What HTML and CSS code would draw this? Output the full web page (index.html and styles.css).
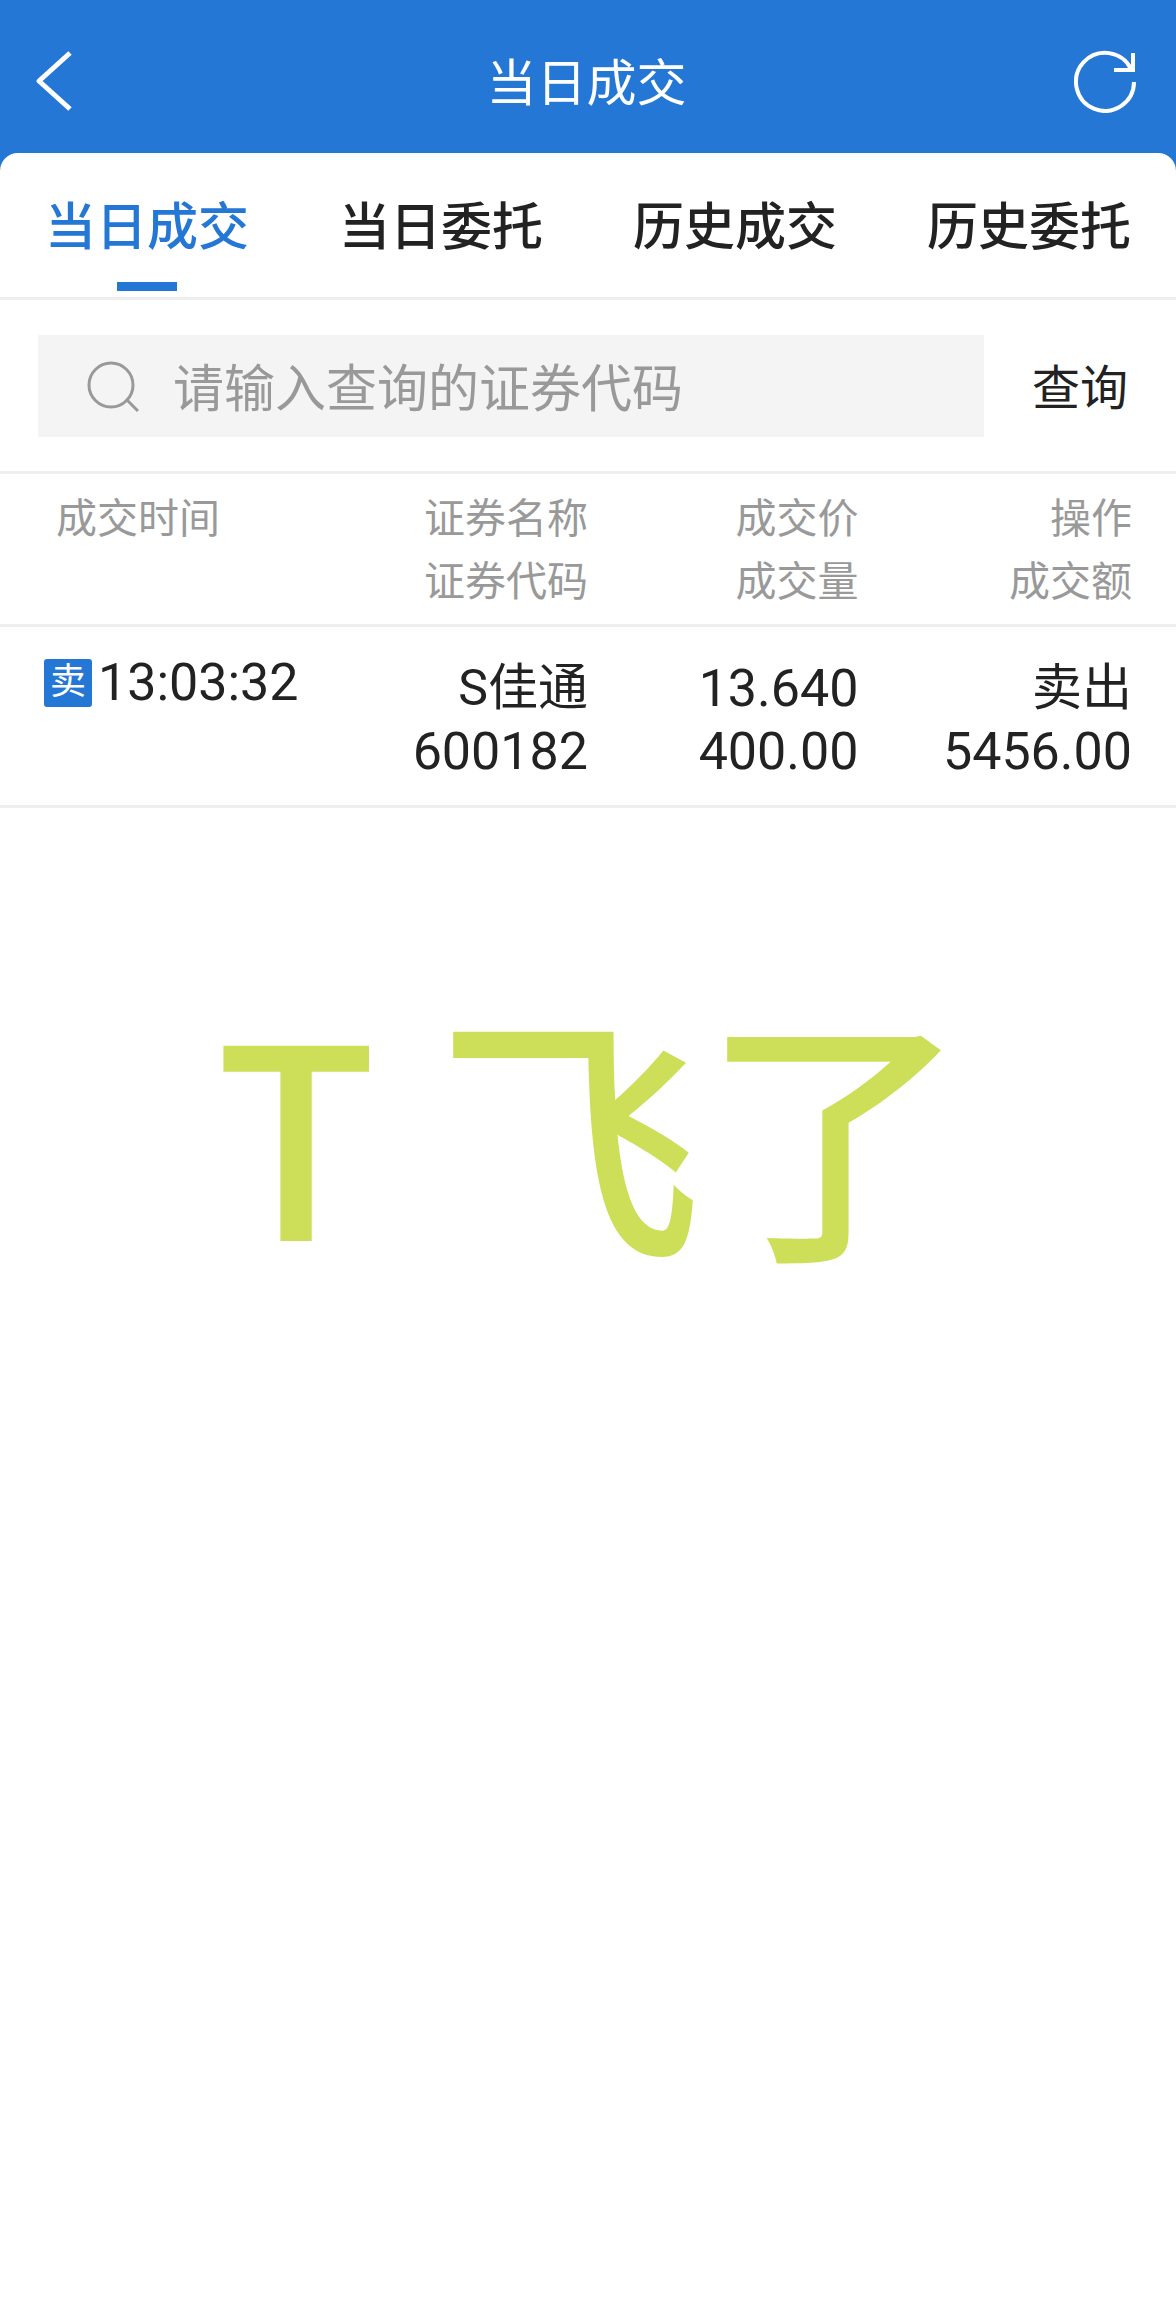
FILE: index.html
```html
<!DOCTYPE html>
<html lang="zh-CN">
<head>
    <meta charset="UTF-8">
    <meta name="viewport" content="width=device-width, initial-scale=1.0">
    <title>当日成交</title>
    <link rel="stylesheet" href="styles.css">
</head>
<body>

    <header class="topbar">
        <button type="button" class="icon-btn" aria-label="返回">
            <svg width="64" height="64" viewBox="0 0 64 64" fill="none" stroke="#fff" stroke-width="5" stroke-linejoin="round">
                <path d="M35 4 L4 32 L35 60"/>
            </svg>
        </button>
        <h1>当日成交</h1>
        <button type="button" class="icon-btn" aria-label="刷新">
            <svg width="64" height="64" viewBox="0 0 64 64" fill="none" stroke="#fff" stroke-width="4">
                <path d="M60 33 A29 29 0 1 1 57 20"/>
                <path d="M59 4 V21 H40"/>
            </svg>
        </button>
    </header>

    <main class="panel">
        <nav class="tabs">
            <a href="#" class="tab active">当日成交</a>
            <a href="#" class="tab">当日委托</a>
            <a href="#" class="tab">历史成交</a>
            <a href="#" class="tab">历史委托</a>
        </nav>

        <form class="search">
            <label class="search-box">
                <svg width="52" height="52" viewBox="0 0 52 52" fill="none" stroke="#999" stroke-width="3">
                    <circle cx="24" cy="25" r="22"/>
                    <path d="M39 39 L51 51"/>
                </svg>
                <input type="text" placeholder="请输入查询的证券代码" aria-label="证券代码">
            </label>
            <button type="submit" class="search-btn">查询</button>
        </form>

        <table class="deals">
            <thead>
                <tr>
                    <th class="time">成交时间</th>
                    <th class="name">证券名称<br>证券代码</th>
                    <th class="price">成交价<br>成交量</th>
                    <th class="action">操作<br>成交额</th>
                </tr>
            </thead>
            <tbody>
                <tr>
                    <td class="time">
                        <div class="time-cell">
                            <span class="badge">卖</span>
                            <span>13:03:32</span>
                        </div>
                    </td>
                    <td class="name"><div class="cn">S佳通</div><div>600182</div></td>
                    <td class="price"><div>13.640</div><div>400.00</div></td>
                    <td class="action"><div class="cn">卖出</div><div>5456.00</div></td>
                </tr>
            </tbody>
        </table>

        <p class="note">T 飞了</p>
    </main>

</body>
</html>
```

FILE: styles.css
```css
* {
    box-sizing: border-box;
}
body {
    display: flex;
    flex-direction: column;
    min-height: 100vh;
    margin: 0;
    background-color: #2577d5;
    color: #222;
    font-family: "Noto Sans CJK SC", sans-serif;
}
button {
    padding: 0;
    border: 0;
    background: none;
    color: inherit;
    font-family: inherit;
    cursor: pointer;
}
svg {
    display: block;
    flex: none;
}

/* top bar */
.topbar {
    display: flex;
    align-items: center;
    justify-content: space-between;
    height: 153px;
    padding: 9px 38px 0 35px;
    color: #fff;
}
.topbar h1 {
    margin: 0;
    padding-bottom: 4px;
    font-size: 50px;
    font-weight: 400;
    line-height: 56px;
}

.panel {
    flex: 1;
    background-color: #fff;
    border-radius: 18px 18px 0 0;
}

/* tabs */
.tabs {
    display: flex;
    border-bottom: 3px solid #eee;
}
.tab {
    position: relative;
    flex: 1;
    padding: 34px 0 38px;
    color: #222;
    font-size: 51px;
    font-weight: 500;
    line-height: 72px;
    text-align: center;
    text-decoration: none;
}
.tab.active {
    color: #2577d5;
}
.tab.active::after {
    content: "";
    position: absolute;
    left: 50%;
    bottom: 6px;
    width: 60px;
    height: 9px;
    margin-left: -30px;
    background-color: #2577d5;
}

/* search */
.search {
    display: flex;
    padding: 35px 0 34px 38px;
    border-bottom: 3px solid #eee;
}
.search-box {
    display: flex;
    flex: 1;
    align-items: center;
    gap: 34px;
    height: 102px;
    padding-left: 49px;
    background-color: #f4f4f4;
}
.search-box input {
    flex: 1;
    min-width: 0;
    padding: 0 0 3px;
    border: 0;
    outline: 0;
    background: none;
    color: #222;
    font-family: inherit;
    font-size: 51px;
}
.search-box input::placeholder {
    color: #999;
}
.search-btn {
    width: 192px;
    padding-bottom: 4px;
    font-size: 48px;
}

/* deals */
.deals {
    width: 100%;
    border-collapse: collapse;
    table-layout: fixed;
    line-height: 63px;
}
.deals tr {
    border-bottom: 3px solid #eee;
}
.deals th {
    padding: 10px 0 14px;
    color: #999;
    font-size: 41px;
    font-weight: 400;
    text-align: right;
    vertical-align: top;
}
.deals td {
    padding: 30px 0 22px;
    font-family: Roboto, "Noto Sans CJK SC", sans-serif;
    font-size: 52px;
    text-align: right;
    vertical-align: top;
}
.deals .cn {
    font-size: 50px;
}
.deals .name {
    width: 25%;
}
.deals .price {
    width: 23%;
}
.deals .action {
    width: 27%;
    padding-right: 44px;
}
.deals .time {
    width: 25%;
    text-align: left;
}
.deals th.time {
    padding-left: 56px;
}
.deals td.time {
    padding: 24px 0 0 44px;
}
.time-cell {
    display: flex;
    align-items: center;
    gap: 6px;
    white-space: nowrap;
}
.badge {
    flex: none;
    width: 48px;
    height: 48px;
    border-radius: 3px;
    background-color: #2577d5;
    color: #fff;
    font-size: 36px;
    line-height: 46px;
    text-align: center;
}

.note {
    margin: 158px 0 0;
    padding-left: 6px;
    color: #cdde58;
    font-size: 265px;
    font-weight: 500;
    line-height: 320px;
    text-align: center;
}
```
